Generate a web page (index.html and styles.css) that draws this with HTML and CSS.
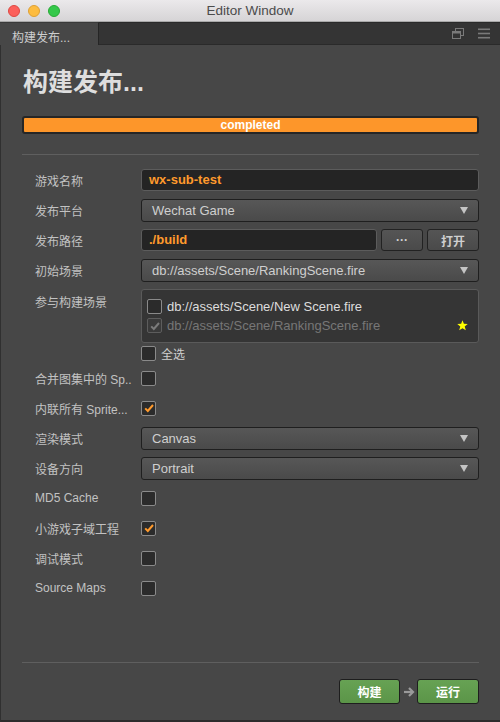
FILE: index.html
```html
<!DOCTYPE html>
<html>
<head>
<meta charset="utf-8">
<link rel="stylesheet" href="styles.css">
</head>
<body>
<div class="window">
  <div class="titlebar">
    <div class="lights">
      <span class="light red"></span>
      <span class="light yellow"></span>
      <span class="light green"></span>
    </div>
    <div class="title">Editor Window</div>
  </div>
  <div class="tabbar">
    <div class="tab">构建发布...</div>
    <div class="tabrest">
      <svg class="ticon" width="12" height="12" viewBox="0 0 12 12"><rect x="3.5" y="0.5" width="8" height="7" fill="none" stroke="#7a7a7a"/><rect x="0.5" y="3.5" width="8" height="7" fill="#333" stroke="#7a7a7a"/><rect x="1" y="4" width="7" height="1.5" fill="#7a7a7a"/></svg>
      <svg class="ticon" width="12" height="11" viewBox="0 0 12 11"><rect x="0" y="0.5" width="12" height="1.6" fill="#7a7a7a"/><rect x="0" y="4.7" width="12" height="1.6" fill="#7a7a7a"/><rect x="0" y="8.9" width="12" height="1.6" fill="#7a7a7a"/></svg>
    </div>
  </div>
  <div class="panel">
    <h1 class="heading">构建发布...</h1>
    <div class="progress"><div class="progress-fill">completed</div></div>
    <div class="sep"></div>
    <div class="rows">
      <div class="row">
        <div class="label">游戏名称</div>
        <div class="control"><div class="input orange">wx-sub-test</div></div>
      </div>
      <div class="row">
        <div class="label">发布平台</div>
        <div class="control"><div class="select"><span>Wechat Game</span><i class="arrow"></i></div></div>
      </div>
      <div class="row">
        <div class="label">发布路径</div>
        <div class="control split">
          <div class="input orange grow">./build</div>
          <div class="btn dots">···</div>
          <div class="btn open">打开</div>
        </div>
      </div>
      <div class="row">
        <div class="label">初始场景</div>
        <div class="control"><div class="select"><span>db://assets/Scene/RankingScene.fire</span><i class="arrow"></i></div></div>
      </div>
      <div class="row scenes-row">
        <div class="label top">参与构建场景</div>
        <div class="control">
          <div class="scenebox">
            <div class="scene"><span class="cb"></span><span class="scene-name">db://assets/Scene/New Scene.fire</span></div>
            <div class="scene disabled"><span class="cb checked dis"><svg width="12" height="12" viewBox="0 0 12 12"><path d="M2.2 6.4 L4.8 9 L10 3" fill="none" stroke="#7b7b7b" stroke-width="2"/></svg></span><span class="scene-name">db://assets/Scene/RankingScene.fire</span>
              <svg class="star" width="11" height="11" viewBox="0 0 12 12"><path d="M6 0.3 L7.5 4.2 L11.7 4.4 L8.4 7 L9.6 11.3 L6 8.9 L2.4 11.3 L3.6 7 L0.3 4.4 L4.5 4.2 Z" fill="#ffff00"/></svg>
            </div>
          </div>
        </div>
      </div>
      <div class="row short">
        <div class="label"></div>
        <div class="control check-line"><span class="cb"></span><span class="cb-text">全选</span></div>
      </div>
      <div class="row">
        <div class="label">合并图集中的 Sp..</div>
        <div class="control"><span class="cb"></span></div>
      </div>
      <div class="row">
        <div class="label">内联所有 Sprite...</div>
        <div class="control"><span class="cb checked"><svg width="12" height="12" viewBox="0 0 12 12"><path d="M2.2 6.4 L4.8 9 L10 3" fill="none" stroke="#ff9a2c" stroke-width="2"/></svg></span></div>
      </div>
      <div class="row">
        <div class="label">渲染模式</div>
        <div class="control"><div class="select"><span>Canvas</span><i class="arrow"></i></div></div>
      </div>
      <div class="row">
        <div class="label">设备方向</div>
        <div class="control"><div class="select"><span>Portrait</span><i class="arrow"></i></div></div>
      </div>
      <div class="row">
        <div class="label">MD5 Cache</div>
        <div class="control"><span class="cb"></span></div>
      </div>
      <div class="row">
        <div class="label">小游戏子域工程</div>
        <div class="control"><span class="cb checked"><svg width="12" height="12" viewBox="0 0 12 12"><path d="M2.2 6.4 L4.8 9 L10 3" fill="none" stroke="#ff9a2c" stroke-width="2"/></svg></span></div>
      </div>
      <div class="row">
        <div class="label">调试模式</div>
        <div class="control"><span class="cb"></span></div>
      </div>
      <div class="row">
        <div class="label">Source Maps</div>
        <div class="control"><span class="cb"></span></div>
      </div>
    </div>
    <div class="spacer"></div>
    <div class="sep bottom"></div>
    <div class="footer">
      <div class="gbtn build">构建</div>
      <svg class="next" width="14" height="12" viewBox="0 0 14 12"><path d="M2 6 H10" stroke="#9a9a9a" stroke-width="2.2"/><path d="M7 2 L11 6 L7 10" fill="none" stroke="#9a9a9a" stroke-width="2.2"/></svg>
      <div class="gbtn run">运行</div>
    </div>
  </div>
</div>
</body>
</html>
```

FILE: styles.css
```css
* { box-sizing: border-box; }
html, body { margin: 0; padding: 0; }
body {
  width: 500px;
  height: 722px;
  overflow: hidden;
  background: #2b2b2b;
  font-family: "Liberation Sans", "Noto Sans CJK SC", sans-serif;
}
.window {
  display: flex;
  flex-direction: column;
  width: 500px;
  height: 722px;
}
.titlebar {
  height: 22px;
  flex: none;
  display: flex;
  align-items: center;
  position: relative;
  background: linear-gradient(#ebe9eb, #d6d4d6);
  border-bottom: 1px solid #a9a9a9;
}
.lights {
  display: flex;
  gap: 8px;
  padding-left: 8px;
}
.light {
  width: 12px;
  height: 12px;
  border-radius: 50%;
}
.red { background: #fc605b; border: 1px solid #de4842; }
.yellow { background: #fdbc40; border: 1px solid #dea034; }
.green { background: #34c84a; border: 1px solid #27aa35; }
.title {
  flex: 1;
  text-align: center;
  margin-left: -60px;
  font-size: 13.5px;
  color: #4b4b4b;
}
.tabbar {
  height: 23px;
  flex: none;
  display: flex;
  background: #2a2a2a;
}
.tab {
  width: 99px;
  flex: none;
  background: #474747;
  color: #cdcdcd;
  font-size: 12px;
  padding-left: 12px;
  padding-top: 5px;
  border-right: 1px solid #252525;
  border-top: 1px solid #3a3a3a;
}
.tabrest {
  flex: 1;
  background: #343434;
  margin-top: 1px;
  display: flex;
  justify-content: flex-end;
  align-items: center;
  gap: 14px;
  padding-right: 10px;
  border-bottom: 1px solid #2a2a2a;
}
.ticon { display: block; }
.panel {
  flex: 1;
  display: flex;
  flex-direction: column;
  background: #474747;
  border-left: 1px solid #303030;
  border-bottom: 2px solid #2c2c2c;
  padding: 0 21px 0 21px;
}
.heading {
  margin: 24px 0 0 1px;
  font-size: 25px;
  line-height: 26px;
  font-weight: bold;
  color: #dedede;
}
.progress {
  margin-top: 21px;
  height: 18px;
  border: 2px solid #262626;
  border-radius: 3px;
  background: #262626;
}
.progress-fill {
  height: 14px;
  background: #fd962a;
  border-radius: 1px;
  color: #ffffff;
  font-weight: bold;
  font-size: 12px;
  line-height: 14px;
  text-align: center;
}
.sep {
  margin-top: 20px;
  height: 1px;
  background: #5f5f5f;
  flex: none;
}
.rows {
  margin-top: 10px;
  display: flex;
  flex-direction: column;
}
.row {
  display: flex;
  align-items: center;
  height: 30px;
  padding-left: 13px;
}
.row.short { height: 20px; }
.scenes-row {
  align-items: flex-start;
  height: 58px;
}
.label {
  width: 106px;
  flex: none;
  font-size: 12px;
  color: #c2c2c2;
  white-space: nowrap;
}
.label.top { margin-top: 8px; }
.control {
  flex: 1;
  display: flex;
  align-items: center;
  min-width: 0;
}
.input {
  flex: 1;
  height: 22px;
  background: #242424;
  border: 1px solid #5c5c5c;
  border-radius: 3px;
  padding-left: 7px;
  font-size: 13px;
  line-height: 20px;
}
.orange { color: #ff9a2c; font-weight: bold; }
.select {
  flex: 1;
  height: 23px;
  display: flex;
  align-items: center;
  justify-content: space-between;
  background: linear-gradient(#575757, #4a4a4a);
  border: 1px solid #1f1f1f;
  border-radius: 3px;
  padding: 0 10px 0 10px;
  font-size: 13px;
  color: #cfcfcf;
}
.arrow {
  width: 0;
  height: 0;
  margin-top: 1px;
  border-left: 4.5px solid transparent;
  border-right: 4.5px solid transparent;
  border-top: 7px solid #c4c4c4;
}
.split { gap: 4px; }
.grow { flex: 1; }
.btn {
  height: 22px;
  flex: none;
  display: flex;
  align-items: center;
  justify-content: center;
  background: linear-gradient(#555555, #4a4a4a);
  border: 1px solid #222222;
  border-radius: 3px;
  color: #cfcfcf;
  font-size: 12px;
}
.dots { width: 42px; font-weight: bold; letter-spacing: 0; }
.open { width: 52px; font-weight: bold; }
.scenebox {
  flex: 1;
  margin-top: 4px;
  height: 54px;
  background: #353535;
  border: 1px solid #5a5a5a;
  border-radius: 3px;
  padding: 7px 10px 0 5px;
}
.scene {
  display: flex;
  align-items: center;
  height: 19px;
  gap: 5px;
}
.scene-name {
  font-size: 13px;
  color: #dddddd;
}
.scene.disabled .scene-name { color: #777777; flex: 1; }
.star { display: block; }
.cb {
  width: 15px;
  height: 15px;
  flex: none;
  background: #2b2b2b;
  border: 1px solid #8a8a8a;
  border-radius: 2px;
  display: flex;
  align-items: center;
  justify-content: center;
}
.cb svg { display: block; }
.cb.dis { border-color: #5d5d5d; background: #3a3a3a; }
.check-line { gap: 5px; margin-top: 1px; }
.cb-text { font-size: 12px; color: #cfcfcf; }
.spacer { flex: 1; }
.sep.bottom { margin-top: 0; }
.footer {
  display: flex;
  justify-content: flex-end;
  align-items: center;
  margin-top: 16px;
  margin-bottom: 16px;
  height: 25px;
}
.gbtn {
  height: 25px;
  display: flex;
  align-items: center;
  justify-content: center;
  background: linear-gradient(#67a254, #5b9548);
  border: 1px solid #1e1e1e;
  border-radius: 3px;
  color: #ffffff;
  font-weight: bold;
  font-size: 12px;
}
.build { width: 61px; }
.run { width: 62px; }
.next { margin: 0 1px 0 2px; }
```
